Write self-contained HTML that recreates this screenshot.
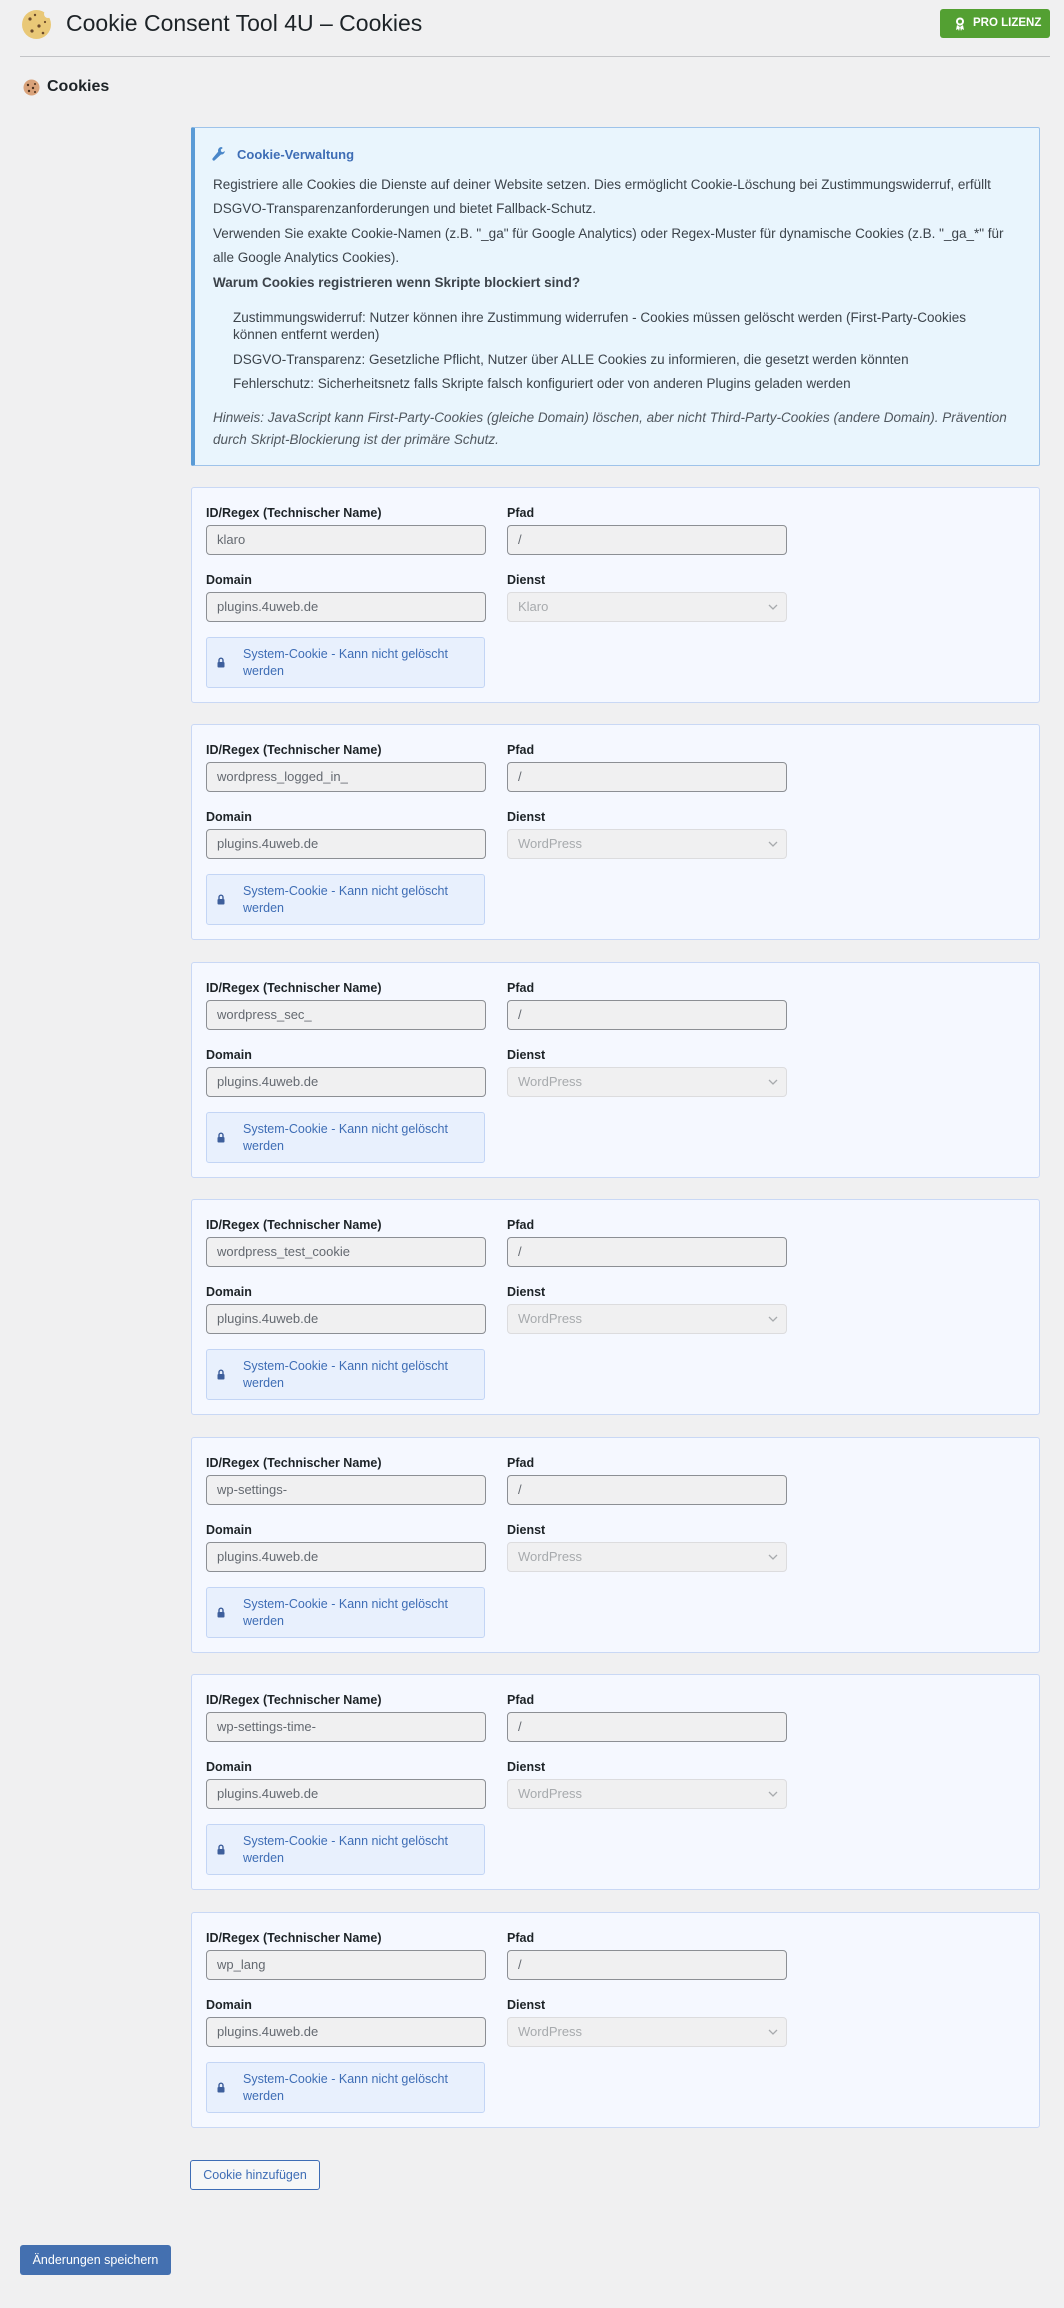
<!DOCTYPE html>
<html><head><meta charset="utf-8">
<style>
*{box-sizing:border-box;margin:0;padding:0}
body{width:1064px;height:2308px;background:#f0f0f1;font-family:"Liberation Sans",sans-serif;color:#1d2327;position:relative;overflow:hidden;font-size:13px}
.abs{position:absolute}
.title{left:66px;top:8px;font-size:23px;line-height:30px;color:#1d2327}
.pro{left:940px;top:9px;width:110px;height:29px;background:#53a032;border-radius:3px;color:#fff;font-weight:bold;font-size:11.5px;line-height:29px;padding-left:33px}
.hr{left:20px;top:56px;width:1030px;height:1px;background:#c3c4c7}
.h2{left:47px;top:76px;font-size:16px;font-weight:bold;line-height:22px}
.info{left:191px;top:127px;width:849px;height:339px;background:#e9f5fd;border:1px solid #9ec3ea;border-left:4px solid #5a9bd6;border-radius:2px}
.info p{position:absolute;left:18px;font-size:13.5px;line-height:17px;color:#3c434a;width:805px}
.card{left:191px;width:849px;height:216px;background:#f5f8ff;border:1px solid #c9d8f5;border-radius:3px}
.lbl{position:absolute;font-size:12.5px;font-weight:bold;line-height:16px;color:#1d2327}
.inp{position:absolute;width:280px;height:30px;background:#f0f0f1;border:1px solid #8c8f94;border-radius:4px;font-size:13px;color:#646970;line-height:28px;padding-left:10px}
.sel{border-color:#dcdcde;color:#a7aaad}
.sys{position:absolute;left:14px;top:149px;width:279px;height:51px;background:#e8f0fd;border:1px solid #c3d5f5;border-radius:3px;color:#3e6db5;font-size:12.5px;line-height:17px;padding:8px 0 0 36px}
.btn2{left:190px;top:2160px;width:130px;height:30px;border:1px solid #3e6db5;border-radius:3px;background:#f6f7f7;color:#3e6db5;font-size:12.5px;line-height:28px;text-align:center}
.save{left:20px;top:2245px;width:151px;height:30px;background:#4470b0;border-radius:3px;color:#fff;font-size:12.5px;line-height:30px;text-align:center}
</style></head><body>
<svg class="abs" style="left:21px;top:9px" width="31" height="31" viewBox="0 0 31 31"><circle cx="15.5" cy="15.5" r="14.5" fill="#e9c877"/><circle cx="27" cy="5" r="4" fill="#f0f0f1"/><circle cx="9" cy="10" r="1.6" fill="#6b4a2b"/><circle cx="18" cy="17" r="1.6" fill="#6b4a2b"/><circle cx="11" cy="22" r="1.6" fill="#6b4a2b"/><circle cx="22" cy="24" r="1.3" fill="#6b4a2b"/><circle cx="14" cy="6" r="1.2" fill="#6b4a2b"/><circle cx="24" cy="13" r="1.1" fill="#6b4a2b"/></svg>
<div class="abs title">Cookie Consent Tool 4U – Cookies</div>
<div class="abs pro"><svg class="abs" style="left:15px;top:8px" width="10" height="14" viewBox="0 0 10 14"><circle cx="5" cy="4.5" r="4" fill="#fff"/><path d="M2 8l-1 5 2-1 1 2 1-4M8 8l1 5-2-1-1 2-1-4" fill="#fff"/><circle cx="5" cy="4.5" r="2" fill="#53a032"/></svg>PRO LIZENZ</div>
<div class="abs hr"></div>
<svg class="abs" style="left:23px;top:79px" width="17" height="17" viewBox="0 0 17 17"><circle cx="8.5" cy="8.5" r="8" fill="#d9a27a"/><circle cx="5" cy="6" r="1.2" fill="#4a2e1c"/><circle cx="10" cy="9" r="1.2" fill="#4a2e1c"/><circle cx="6" cy="12" r="1.2" fill="#4a2e1c"/><circle cx="12" cy="5" r="1" fill="#4a2e1c"/><circle cx="12" cy="13" r="1" fill="#4a2e1c"/></svg>
<div class="abs h2">Cookies</div>

<div class="abs info">
<svg class="abs" style="left:16px;top:18px" width="14" height="16" viewBox="0 0 14 16"><path d="M10.5 1a3.5 3.5 0 0 0-3.3 4.6L1.5 12.5a1.5 1.5 0 0 0 2 2l6.5-6A3.5 3.5 0 0 0 13.8 5l-2 1.3-1.8-.8-.2-2L11.8 2z" fill="#4a87c9"/></svg>
<p style="left:42px;top:18px;color:#3e6db5;font-weight:bold;font-size:13px">Cookie-Verwaltung</p>
<p style="top:45px;line-height:24px">Registriere alle Cookies die Dienste auf deiner Website setzen. Dies ermöglicht Cookie-Löschung bei Zustimmungswiderruf, erfüllt DSGVO-Transparenzanforderungen und bietet Fallback-Schutz.</p>
<p style="top:94px;line-height:24px">Verwenden Sie exakte Cookie-Namen (z.B. "_ga" für Google Analytics) oder Regex-Muster für dynamische Cookies (z.B. "_ga_*" für alle Google Analytics Cookies).</p>
<p style="top:146px;font-weight:bold">Warum Cookies registrieren wenn Skripte blockiert sind?</p>
<p style="left:38px;top:181px;width:770px">Zustimmungswiderruf: Nutzer können ihre Zustimmung widerrufen - Cookies müssen gelöscht werden (First-Party-Cookies können entfernt werden)</p>
<p style="left:38px;top:223px">DSGVO-Transparenz: Gesetzliche Pflicht, Nutzer über ALLE Cookies zu informieren, die gesetzt werden könnten</p>
<p style="left:38px;top:247px">Fehlerschutz: Sicherheitsnetz falls Skripte falsch konfiguriert oder von anderen Plugins geladen werden</p>
<p style="top:279px;line-height:22px;font-style:italic;color:#50575e">Hinweis: JavaScript kann First-Party-Cookies (gleiche Domain) löschen, aber nicht Third-Party-Cookies (andere Domain). Prävention durch Skript-Blockierung ist der primäre Schutz.</p>
</div>

<div id="cards"></div>
<script>
var d=[["klaro","Klaro"],["wordpress_logged_in_","WordPress"],["wordpress_sec_","WordPress"],["wordpress_test_cookie","WordPress"],["wp-settings-","WordPress"],["wp-settings-time-","WordPress"],["wp_lang","WordPress"]];
var tops=[487,724,962,1199,1437,1674,1912],h="";
d.forEach(function(c,i){h+='<div class="abs card" style="top:'+tops[i]+'px">'+
'<div class="lbl" style="left:14px;top:17px">ID/Regex (Technischer Name)</div>'+
'<div class="lbl" style="left:315px;top:17px">Pfad</div>'+
'<div class="inp" style="left:14px;top:37px">'+c[0]+'</div>'+
'<div class="inp" style="left:315px;top:37px">/</div>'+
'<div class="lbl" style="left:14px;top:84px">Domain</div>'+
'<div class="lbl" style="left:315px;top:84px">Dienst</div>'+
'<div class="inp" style="left:14px;top:104px">plugins.4uweb.de</div>'+
'<div class="inp sel" style="left:315px;top:104px">'+c[1]+'<svg style="position:absolute;right:8px;top:11px" width="10" height="7" viewBox="0 0 10 7"><path d="M1 1l4 4 4-4" fill="none" stroke="#a7aaad" stroke-width="1.3"/></svg></div>'+
'<div class="sys"><svg style="position:absolute;left:10px;top:19px" width="8" height="11" viewBox="0 0 8 11"><path d="M2 5V3.2a2 2 0 0 1 4 0V5" fill="none" stroke="#3e5f9c" stroke-width="1.4"/><rect x="0.5" y="5" width="7" height="5.5" rx="1" fill="#3e5f9c"/></svg>System-Cookie - Kann nicht gelöscht werden</div>'+
'</div>';});
document.getElementById("cards").innerHTML=h;
</script>
<div class="abs btn2">Cookie hinzufügen</div>
<div class="abs save">Änderungen speichern</div>
</body></html>
